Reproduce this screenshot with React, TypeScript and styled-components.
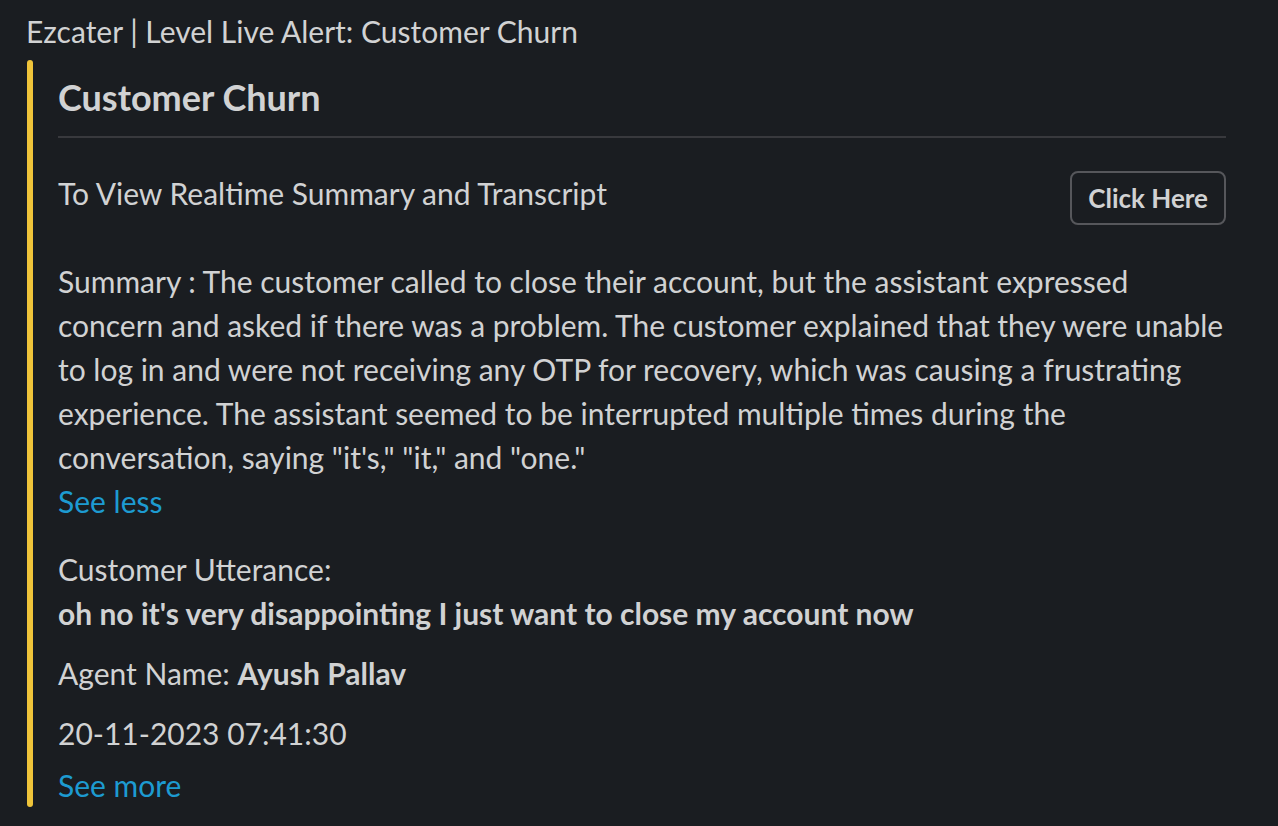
import React from 'react';
import styled, {createGlobalStyle} from "styled-components";

const GlobalStyle = createGlobalStyle`
    html, body {
        margin: 0;
        padding: 0;
        background-color: #1a1d21;
    }
    body {
        font-family: "Lato", "Noto Sans", sans-serif;
        color: #d1d2d3;
    }
`

const summary = `Summary : The customer called to close their account, but the assistant expressed concern and asked if there was a problem. The customer explained that they were unable to log in and were not receiving any OTP for recovery, which was causing a frustrating experience. The assistant seemed to be interrupted multiple times during the conversation, saying "it's," "it," and "one."`

export default function App() {
    return (
        <>
            <GlobalStyle/>
            <StyledMessage>
                <Header>Ezcater | Level Live Alert: Customer Churn</Header>
                <Attachment>
                    <Bar/>
                    <Content>
                        <Title>Customer Churn</Title>
                        <Divider/>
                        <ActionRow>
                            <Text>To View Realtime Summary and Transcript</Text>
                            <Button>Click Here</Button>
                        </ActionRow>
                        <Section $gap={34}>
                            <Text>{summary}</Text>
                            <Link>See less</Link>
                        </Section>
                        <Section $gap={24}>
                            <Text>Customer Utterance:</Text>
                            <Text><b>oh no it's very disappointing I just want to close my account now</b></Text>
                        </Section>
                        <Section $gap={16}>
                            <Text>Agent Name: <b>Ayush Pallav</b></Text>
                        </Section>
                        <Section $gap={16}>
                            <Text>20-11-2023 07:41:30</Text>
                        </Section>
                        <Section $gap={8}>
                            <Link>See more</Link>
                        </Section>
                    </Content>
                </Attachment>
            </StyledMessage>
        </>
    );
}

const StyledMessage = styled.div`
    padding: 9px 52px 20px 27px;
`

const Header = styled.div`
    margin-left: -1px;
    font-size: 30px;
    line-height: 44px;
    color: #d1d2d3;
`

const Attachment = styled.div`
    display: flex;
    margin-top: 7px;
`

const Bar = styled.div`
    flex: 0 0 6px;
    border-radius: 3px;
    background-color: #efc43a;
`

const Content = styled.div`
    flex: 1;
    padding: 12px 0 0 25px;
    
    b {
        font-weight: 700;
    }
`

const Title = styled.h2`
    margin: 0;
    font-size: 36px;
    line-height: 50px;
    font-weight: 700;
`

const Divider = styled.hr`
    margin: 14px 0 0;
    border: none;
    height: 2px;
    background-color: #38393d;
`

const ActionRow = styled.div`
    display: flex;
    justify-content: space-between;
    align-items: flex-start;
    margin-top: 33px;
`

const Text = styled.div`
    font-size: 30px;
    line-height: 44px;
`

const Button = styled.button`
    flex-shrink: 0;
    height: 54px;
    padding: 0 16px;
    border: 2px solid #56575b;
    border-radius: 8px;
    background: transparent;
    color: #d1d2d3;
    font: 700 26px "Lato", sans-serif;
    cursor: pointer;
`

const Section = styled.div<{ $gap: number }>`
    margin-top: ${({$gap}) => $gap}px;
`

const Link = styled.a`
    display: block;
    font-size: 30px;
    line-height: 44px;
    color: #1d9bd1;
    cursor: pointer;
`
